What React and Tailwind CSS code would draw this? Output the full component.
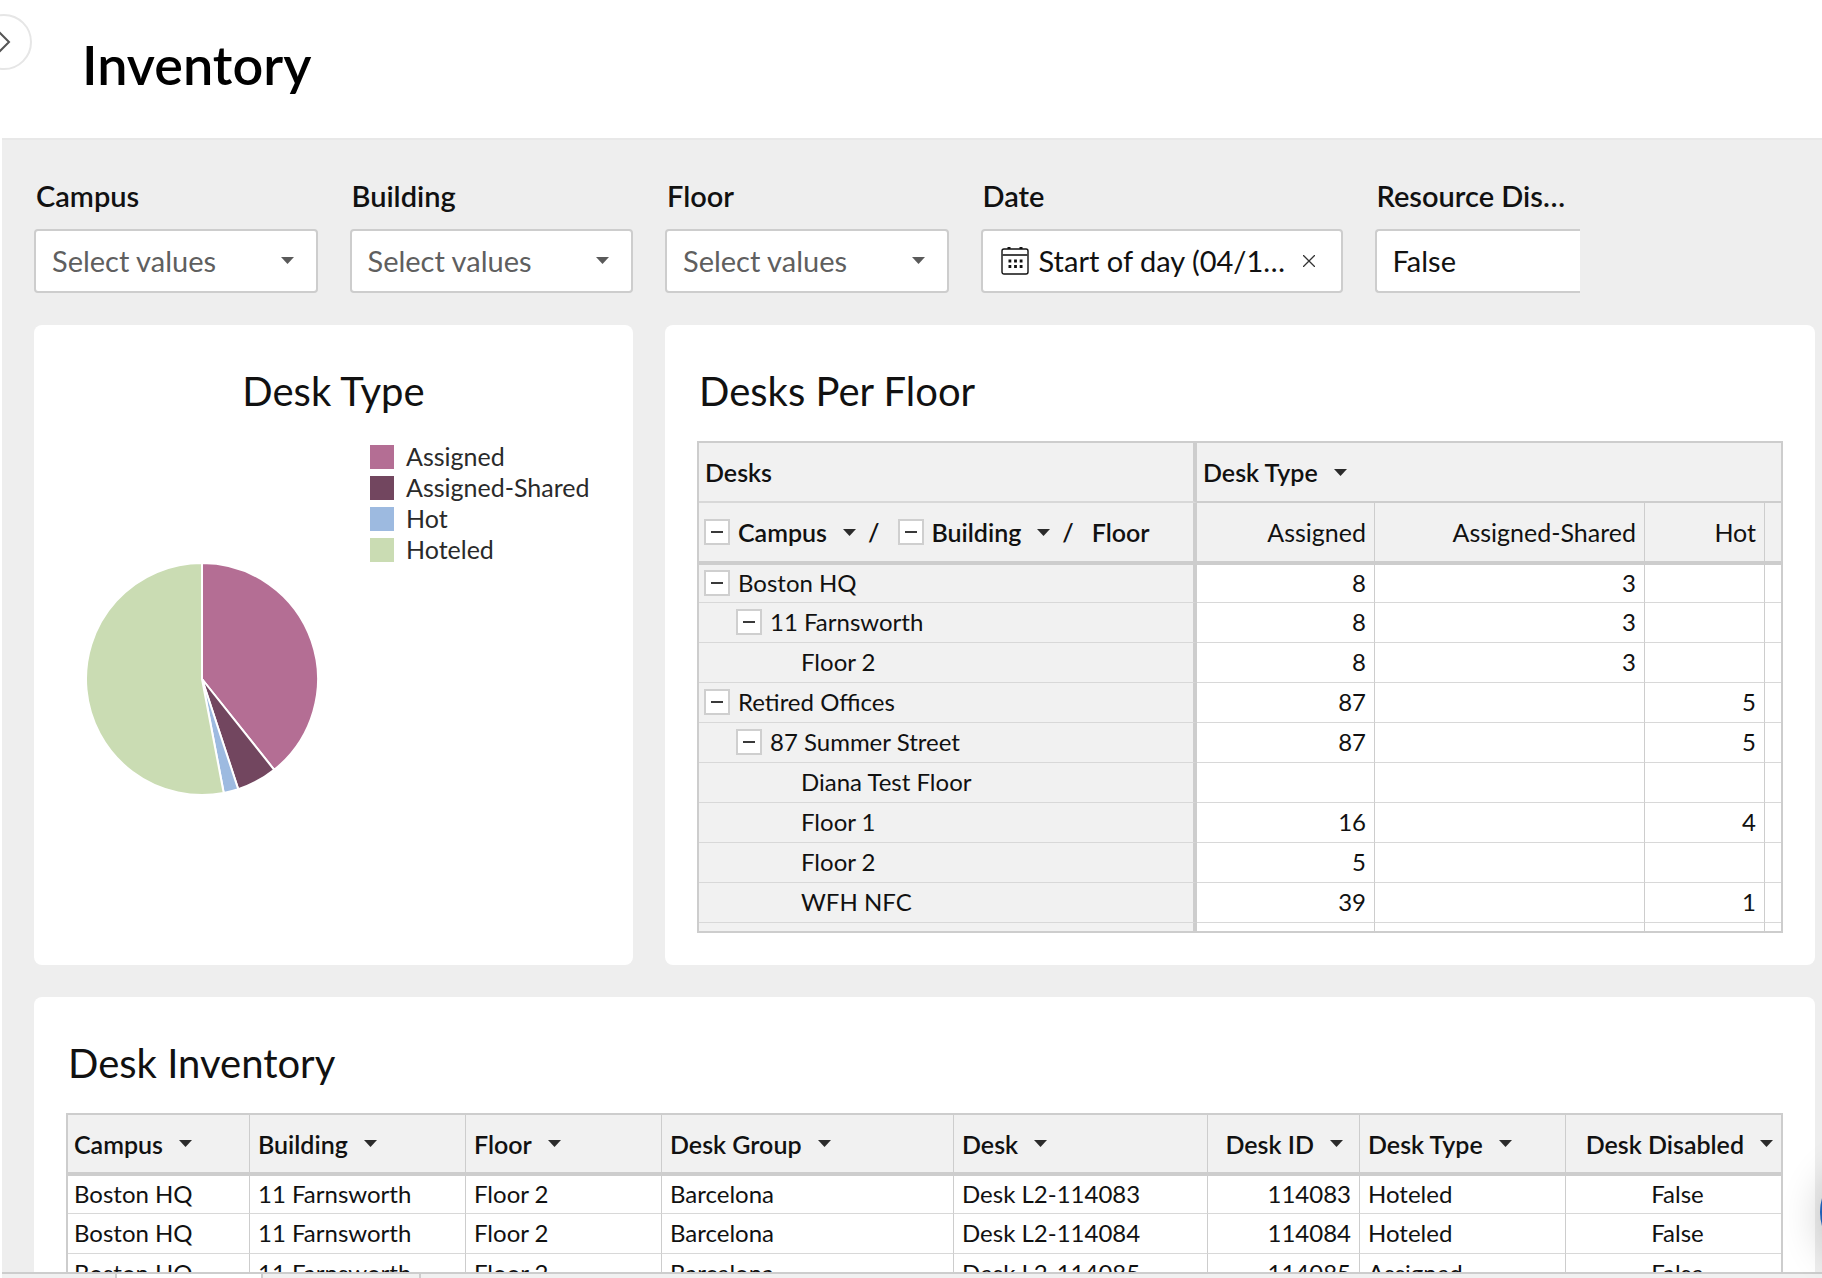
import clsx from 'clsx';

const slices = [
  { label: 'Assigned', color: '#b46e94', from: 0, to: 141.5 },
  { label: 'Assigned-Shared', color: '#72465f', from: 141.5, to: 161.8 },
  { label: 'Hot', color: '#9dbae0', from: 161.8, to: 169.2 },
  { label: 'Hoteled', color: '#cadcb3', from: 169.2, to: 360 },
];

const floorRows = [
  { level: 0, name: 'Boston HQ', values: ['8', '3', ''] },
  { level: 1, name: '11 Farnsworth', values: ['8', '3', ''] },
  { level: 2, name: 'Floor 2', values: ['8', '3', ''] },
  { level: 0, name: 'Retired Offices', values: ['87', '', '5'] },
  { level: 1, name: '87 Summer Street', values: ['87', '', '5'] },
  { level: 2, name: 'Diana Test Floor', values: ['', '', ''] },
  { level: 2, name: 'Floor 1', values: ['16', '', '4'] },
  { level: 2, name: 'Floor 2', values: ['5', '', ''] },
  { level: 2, name: 'WFH NFC', values: ['39', '', '1'] },
  { level: 2, name: '', values: ['', '', ''] },
];

const deskColumns = [
  { label: 'Campus', width: 'w-[182px]' },
  { label: 'Building', width: 'w-[216px]' },
  { label: 'Floor', width: 'w-[196px]' },
  { label: 'Desk Group', width: 'w-[292px]' },
  { label: 'Desk', width: 'w-[254px]' },
  { label: 'Desk ID', width: 'w-[152px]', align: 'right' },
  { label: 'Desk Type', width: 'w-[206px]' },
  { label: 'Desk Disabled', width: '', align: 'center' },
];

const deskRows = [
  ['Boston HQ', '11 Farnsworth', 'Floor 2', 'Barcelona', 'Desk L2-114083', '114083', 'Hoteled', 'False'],
  ['Boston HQ', '11 Farnsworth', 'Floor 2', 'Barcelona', 'Desk L2-114084', '114084', 'Hoteled', 'False'],
  ['Boston HQ', '11 Farnsworth', 'Floor 2', 'Barcelona', 'Desk L2-114085', '114085', 'Assigned', 'False'],
];

const indent = ['pl-[5px]', 'pl-[37px]', 'pl-[102px]'];

function Caret({ className }) {
  return (
    <svg viewBox="0 0 13 7" className={clsx('h-[7px] w-[13px] shrink-0', className)} aria-hidden="true">
      <path d="M0 0h13L6.5 7z" fill="currentColor" />
    </svg>
  );
}

function SortLabel({ children }) {
  return (
    <button type="button" className="flex items-center gap-4 whitespace-nowrap">
      {children}
      <Caret className="text-[#2b2b2b]" />
    </button>
  );
}

function Collapse({ label }) {
  return (
    <button
      type="button"
      aria-label={`Collapse ${label}`}
      className="flex size-[26px] shrink-0 items-center justify-center border-2 border-[#cfcfcf] bg-white"
    >
      <span className="h-0.5 w-3 bg-[#3a3a3a]" />
    </button>
  );
}

function CardTitle({ className, children }) {
  return <h2 className={clsx('px-0.5 pt-1.5 pb-[22px] text-[40px] leading-[56px]', className)}>{children}</h2>;
}

function Field({ id, label, children }) {
  return (
    <div className="min-w-0">
      <label htmlFor={id} className="block truncate pr-2 pl-0.5 text-[29px] leading-9 font-semibold">
        {label}
      </label>
      <div className="mt-[15px]">{children}</div>
    </div>
  );
}

function ValueSelect({ id, label }) {
  return (
    <Field id={id} label={label}>
      <div className="relative">
        <select
          id={id}
          className="h-16 w-full appearance-none rounded border-2 border-[#cdcdcd] bg-white px-4 text-[29px] text-[#5f5f5f]"
        >
          <option>Select values</option>
        </select>
        <Caret className="pointer-events-none absolute top-7 right-6 text-[#5a5a5a]" />
      </div>
    </Field>
  );
}

function CalendarIcon() {
  return (
    <svg viewBox="0 0 28 30" className="h-[30px] w-7 shrink-0" fill="none" stroke="#111" aria-hidden="true">
      <rect x="1" y="3" width="26" height="25" rx="2" strokeWidth="1.4" />
      <path d="M1 9h26" stroke="#444" strokeWidth="2" />
      <path d="M6.5 2h3M18.5 2h3" strokeWidth="2" />
      <path d="M7.5 15h14M7.5 20.5h14" strokeWidth="2.8" strokeDasharray="2.8 2.8" />
    </svg>
  );
}

function point(deg) {
  const rad = (deg * Math.PI) / 180;
  return `${116 + 116 * Math.sin(rad)} ${116 - 116 * Math.cos(rad)}`;
}

function DeskTypeChart() {
  return (
    <section className="rounded-lg bg-white p-8">
      <CardTitle className="text-center">Desk Type</CardTitle>
      <div className="flex">
        <svg viewBox="0 0 232 232" className="mt-[122px] ml-5 size-[232px] shrink-0" role="img" aria-label="Desk Type">
          {slices.map(s => (
            <path
              key={s.label}
              d={`M116 116L${point(s.from)}A116 116 0 ${s.to - s.from > 180 ? 1 : 0} 1 ${point(s.to)}Z`}
              fill={s.color}
              stroke="#fff"
              strokeWidth="2"
            />
          ))}
        </svg>
        <ul className="ml-[52px] text-[25px] leading-[31px] text-[#2a2a2a]">
          {slices.map(s => (
            <li key={s.label} className="flex items-center gap-3">
              <svg viewBox="0 0 24 24" className="size-6 shrink-0" aria-hidden="true">
                <rect width="24" height="24" fill={s.color} />
              </svg>
              {s.label}
            </li>
          ))}
        </ul>
      </div>
    </section>
  );
}

function DesksPerFloor() {
  const typeHead = 'border-r border-b-4 border-[#cdcdcd] px-2 text-right font-normal';
  return (
    <section className="min-w-0 rounded-lg bg-white p-8">
      <CardTitle>Desks Per Floor</CardTitle>
      <div className="h-[492px] overflow-hidden border-2 border-[#cdcdcd]">
        <table className="w-full table-fixed border-separate border-spacing-0 text-2xl leading-8">
          <colgroup>
            <col className="w-[498px]" />
            <col className="w-[178px]" />
            <col className="w-[270px]" />
            <col className="w-[120px]" />
            <col />
          </colgroup>
          <thead className="bg-[#f1f1f1] text-[25px]">
            <tr className="h-[60px]">
              <th className="border-r-4 border-b-2 border-r-[#cdcdcd] border-b-[#d8d8d8] px-1.5 text-left font-semibold">Desks</th>
              <th colSpan={4} className="border-b-2 border-[#cdcdcd] px-1.5 text-left font-semibold">
                <SortLabel>Desk Type</SortLabel>
              </th>
            </tr>
            <tr className="h-[62px]">
              <th className="border-r-4 border-b-4 border-[#cdcdcd] pl-[5px] text-left font-semibold">
                <div className="flex items-center gap-2">
                  <Collapse label="Campus" />
                  <SortLabel>Campus</SortLabel>
                  <span className="mx-1">/</span>
                  <span className="ml-1.5">
                    <Collapse label="Building" />
                  </span>
                  <SortLabel>Building</SortLabel>
                  <span className="mx-1">/</span>
                  <span className="ml-1.5">Floor</span>
                </div>
              </th>
              <th className={typeHead}>Assigned</th>
              <th className={typeHead}>Assigned-Shared</th>
              <th className={typeHead}>Hot</th>
              <th className="border-b-4 border-[#cdcdcd]" />
            </tr>
          </thead>
          <tbody>
            {floorRows.map((row, i) => (
              <tr key={i} className="h-10 first:h-[38px]">
                <th
                  className={clsx(
                    'border-r-4 border-b border-r-[#cdcdcd] border-b-[#d8d8d8] bg-[#f1f1f1] pb-0.5 text-left font-normal',
                    indent[row.level]
                  )}
                >
                  <div className="flex items-center gap-2">
                    {row.level < 2 && <Collapse label={row.name} />}
                    {row.name}
                  </div>
                </th>
                {row.values.map((v, j) => (
                  <td key={j} className="border-r border-b border-r-[#cdcdcd] border-b-[#d8d8d8] px-2 pb-0.5 text-right">
                    {v}
                  </td>
                ))}
                <td className="border-b border-[#d8d8d8]" />
              </tr>
            ))}
          </tbody>
        </table>
      </div>
    </section>
  );
}

function DeskInventory() {
  return (
    <section className="rounded-lg bg-white p-8">
      <CardTitle>Desk Inventory</CardTitle>
      <div className="overflow-hidden border-2 border-[#cdcdcd]">
        <table className="w-full table-fixed border-separate border-spacing-0 text-2xl leading-8">
          <thead className="bg-[#f1f1f1] text-[25px]">
            <tr className="h-[61px]">
              {deskColumns.map(c => (
                <th
                  key={c.label}
                  className={clsx(
                    'border-r border-b-4 border-[#cdcdcd] px-2 text-left font-semibold first:pl-1.5 last:border-r-0',
                    c.width
                  )}
                >
                  <div className={clsx('flex', c.align && 'justify-end', c.align === 'right' && 'pr-2')}>
                    <SortLabel>{c.label}</SortLabel>
                  </div>
                </th>
              ))}
            </tr>
          </thead>
          <tbody>
            {deskRows.map(row => (
              <tr key={row[5]} className="h-10 first:h-[38px]">
                {row.map((v, i) => (
                  <td
                    key={i}
                    className={clsx(
                      'border-r border-b border-r-[#cdcdcd] border-b-[#d8d8d8] px-2 pb-0.5 first:pl-1.5 last:border-r-0',
                      deskColumns[i].align === 'right' && 'text-right',
                      deskColumns[i].align === 'center' && 'pl-4 text-center'
                    )}
                  >
                    {v}
                  </td>
                ))}
              </tr>
            ))}
          </tbody>
        </table>
      </div>
    </section>
  );
}

export default function App() {
  return (
    <div className="relative flex h-screen overflow-hidden bg-white pl-0.5 font-['Lato',sans-serif] text-[#111]">
      <div className="flex min-w-0 flex-1 flex-col">
        <header className="border-b-2 border-[#e8e8e8] px-20 pt-8 pb-10">
          <h1 className="text-[54px] leading-[66px] font-semibold text-black">Inventory</h1>
        </header>

        <main className="min-h-0 flex-1 overflow-hidden bg-[#eeeeee] pt-[38px] pr-[7px] pl-8">
          {/* Filters */}
          <div className="grid grid-cols-[567fr_567fr_567fr_724fr_410fr_407fr] gap-x-8">
            <ValueSelect id="campus" label="Campus" />
            <ValueSelect id="building" label="Building" />
            <ValueSelect id="floor" label="Floor" />
            <Field id="date" label="Date">
              <div className="flex h-16 items-center gap-2.5 rounded border-2 border-[#cdcdcd] bg-white pr-[26px] pl-[18px]">
                <CalendarIcon />
                <input
                  id="date"
                  readOnly
                  defaultValue="Start of day (04/11/2023)"
                  className="min-w-0 flex-1 truncate text-[29px] outline-none"
                />
                <button type="button" aria-label="Clear date">
                  <svg viewBox="0 0 12 12" className="size-3" stroke="#333" strokeWidth="1.3" aria-hidden="true">
                    <path d="M0 0l12 12M12 0L0 12" />
                  </svg>
                </button>
              </div>
            </Field>
            <Field id="disabled" label="Resource Disabled">
              <select
                id="disabled"
                className="h-16 w-full appearance-none rounded-l border-2 border-r-0 border-[#cdcdcd] bg-white px-4 text-[29px]"
              >
                <option>False</option>
              </select>
            </Field>
          </div>

          {/* Charts */}
          <div className="mt-8 grid grid-cols-[599fr_1150fr] gap-8">
            <DeskTypeChart />
            <DesksPerFloor />
          </div>

          <div className="mt-8">
            <DeskInventory />
          </div>
        </main>

        {/* Sheet tabs, scrolled mostly out of view */}
        <nav className="flex h-1.5 shrink-0 border-t-2 border-[#cdcdcd] bg-[#f1f1f1]">
          <span className="w-[115px] border-r-2 border-[#cdcdcd]" />
          <span className="w-[146px] border-r-2 border-[#cdcdcd] bg-white" />
          <span className="w-[158px] border-r-2 border-[#cdcdcd]" />
        </nav>
      </div>

      {/* Sidebar toggle */}
      <button
        type="button"
        aria-label="Expand sidebar"
        className="absolute top-3.5 -left-6 size-14 rounded-full border-2 border-[#e6e6e6] bg-white"
      >
        <svg viewBox="0 0 56 56" className="absolute -inset-0.5 size-14" fill="none" stroke="#555" strokeWidth="2" aria-hidden="true">
          <path d="M23 18l10 10-10 10" />
        </svg>
      </button>

      {/* Help bubble */}
      <button
        type="button"
        aria-label="Help"
        className="absolute -right-[98px] bottom-4 size-[100px] rounded-full bg-[#1f5fb5] shadow-[0_4px_40px_rgba(0,0,0,0.2)]"
      />
    </div>
  );
}
